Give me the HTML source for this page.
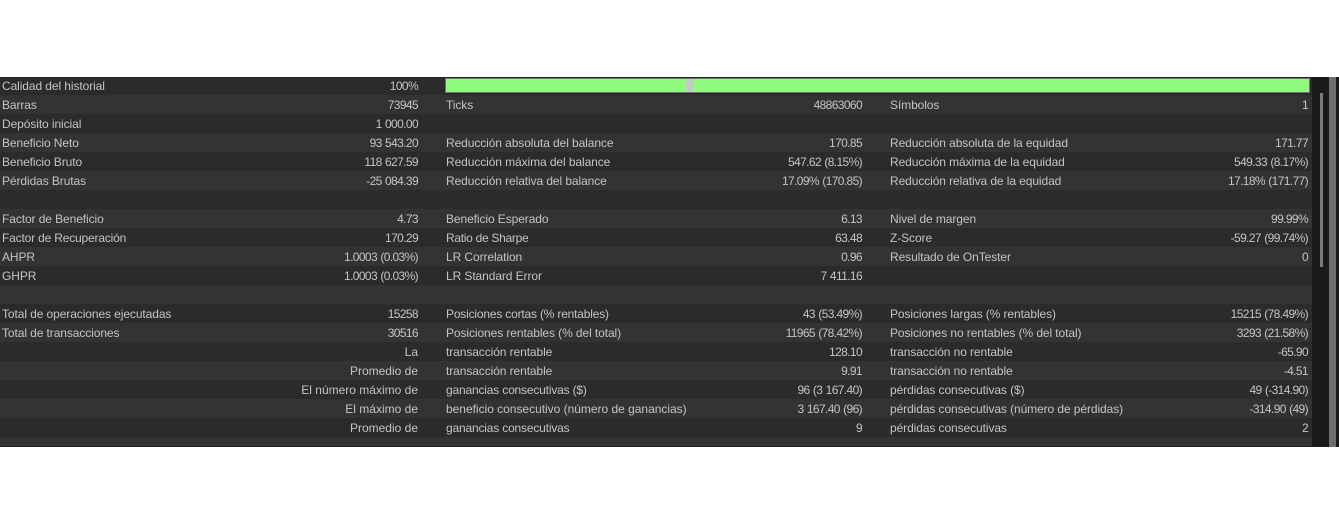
<!DOCTYPE html>
<html lang="es"><head><meta charset="utf-8"><title>Informe</title>
<style>
html,body{margin:0;padding:0;background:#fff;width:1339px;height:528px;overflow:hidden}
body{position:relative;font:12px/19px "Liberation Sans",sans-serif;color:#c4c4c4}
#wrap{position:absolute;left:0;top:77px;width:1312px;height:370px;background:#2b2b2b;overflow:hidden}
.r{position:absolute;left:0;width:1312px;height:19px;white-space:nowrap}
.r:nth-child(even){background:#333}
.r span{position:absolute;top:1px;letter-spacing:-.09px}
.a{left:2px}.b{right:894px}.c{left:446px}.d{right:450px}.e{left:890px}.f{right:4px}
.r span.b,.r span.d,.r span.f{letter-spacing:-.62px;word-spacing:.6px}
.r span.w{letter-spacing:0;word-spacing:0}
.r span.n1{letter-spacing:-.18px}
.r span.n2{letter-spacing:-.19px}
.r span.n3{letter-spacing:-.29px}
.r span.p1{letter-spacing:-.02px}
</style></head><body>
<div id="wrap">
<div class="r" style="top:-1px"><span class="a">Calidad del historial</span><span class="b">100%</span></div>
<div class="r" style="top:18px"><span class="a">Barras</span><span class="b">73945</span><span class="c">Ticks</span><span class="d">48863060</span><span class="e">Símbolos</span><span class="f">1</span></div>
<div class="r" style="top:37px"><span class="a">Depósito inicial</span><span class="b">1 000.00</span></div>
<div class="r" style="top:56px"><span class="a">Beneficio Neto</span><span class="b">93 543.20</span><span class="c">Reducción absoluta del balance</span><span class="d">170.85</span><span class="e">Reducción absoluta de la equidad</span><span class="f">171.77</span></div>
<div class="r" style="top:75px"><span class="a">Beneficio Bruto</span><span class="b">118 627.59</span><span class="c">Reducción máxima del balance</span><span class="d">547.62 (8.15%)</span><span class="e">Reducción máxima de la equidad</span><span class="f">549.33 (8.17%)</span></div>
<div class="r" style="top:94px"><span class="a">Pérdidas Brutas</span><span class="b">-25 084.39</span><span class="c">Reducción relativa del balance</span><span class="d">17.09% (170.85)</span><span class="e">Reducción relativa de la equidad</span><span class="f">17.18% (171.77)</span></div>
<div class="r" style="top:113px"></div>
<div class="r" style="top:132px"><span class="a">Factor de Beneficio</span><span class="b">4.73</span><span class="c">Beneficio Esperado</span><span class="d">6.13</span><span class="e">Nivel de margen</span><span class="f">99.99%</span></div>
<div class="r" style="top:151px"><span class="a n1">Factor de Recuperación</span><span class="b">170.29</span><span class="c n3">Ratio de Sharpe</span><span class="d">63.48</span><span class="e">Z-Score</span><span class="f">-59.27 (99.74%)</span></div>
<div class="r" style="top:170px"><span class="a">AHPR</span><span class="b">1.0003 (0.03%)</span><span class="c">LR Correlation</span><span class="d">0.96</span><span class="e">Resultado de OnTester</span><span class="f">0</span></div>
<div class="r" style="top:189px"><span class="a">GHPR</span><span class="b">1.0003 (0.03%)</span><span class="c">LR Standard Error</span><span class="d">7 411.16</span></div>
<div class="r" style="top:208px"></div>
<div class="r" style="top:227px"><span class="a">Total de operaciones ejecutadas</span><span class="b">15258</span><span class="c n2">Posiciones cortas (% rentables)</span><span class="d">43 (53.49%)</span><span class="e">Posiciones largas (% rentables)</span><span class="f">15215 (78.49%)</span></div>
<div class="r" style="top:246px"><span class="a">Total de transacciones</span><span class="b">30516</span><span class="c">Posiciones rentables (% del total)</span><span class="d">11965 (78.42%)</span><span class="e">Posiciones no rentables (% del total)</span><span class="f">3293 (21.58%)</span></div>
<div class="r" style="top:265px"><span class="b w">La</span><span class="c">transacción rentable</span><span class="d">128.10</span><span class="e">transacción no rentable</span><span class="f">-65.90</span></div>
<div class="r" style="top:284px"><span class="b w">Promedio de</span><span class="c">transacción rentable</span><span class="d">9.91</span><span class="e">transacción no rentable</span><span class="f">-4.51</span></div>
<div class="r" style="top:303px"><span class="b w">El número máximo de</span><span class="c n1">ganancias consecutivas ($)</span><span class="d">96 (3 167.40)</span><span class="e">pérdidas consecutivas ($)</span><span class="f">49 (-314.90)</span></div>
<div class="r" style="top:322px"><span class="b w">El máximo de</span><span class="c p1">beneficio consecutivo (número de ganancias)</span><span class="d">3 167.40 (96)</span><span class="e">pérdidas consecutivas (número de pérdidas)</span><span class="f">-314.90 (49)</span></div>
<div class="r" style="top:341px"><span class="b w">Promedio de</span><span class="c n1">ganancias consecutivas</span><span class="d">9</span><span class="e">pérdidas consecutivas</span><span class="f">2</span></div>
<div class="r" style="top:360px"></div>
</div>
<div style="position:absolute;left:0;top:77px;width:1312px;height:1px;background:#222"></div>
<div style="position:absolute;left:0;top:446px;width:1312px;height:1px;background:#222"></div>
<div style="position:absolute;left:445px;top:78px;width:863px;height:13px;background:#90fc7e;border:1px solid #707070"></div>
<div style="position:absolute;left:686px;top:79px;width:7px;height:13px;background:#c8c8c8"></div>
<div style="position:absolute;left:1312px;top:77px;width:17px;height:370px;background:#1a1a1a"></div>
<div style="position:absolute;left:1320px;top:93px;width:3px;height:174px;background:#7c7c7c"></div>
<div style="position:absolute;left:1329px;top:77px;width:7px;height:370px;background:#6e6e6e"></div>
<div style="position:absolute;left:1336px;top:77px;width:3px;height:370px;background:#1a1a1a"></div>
</body></html>
